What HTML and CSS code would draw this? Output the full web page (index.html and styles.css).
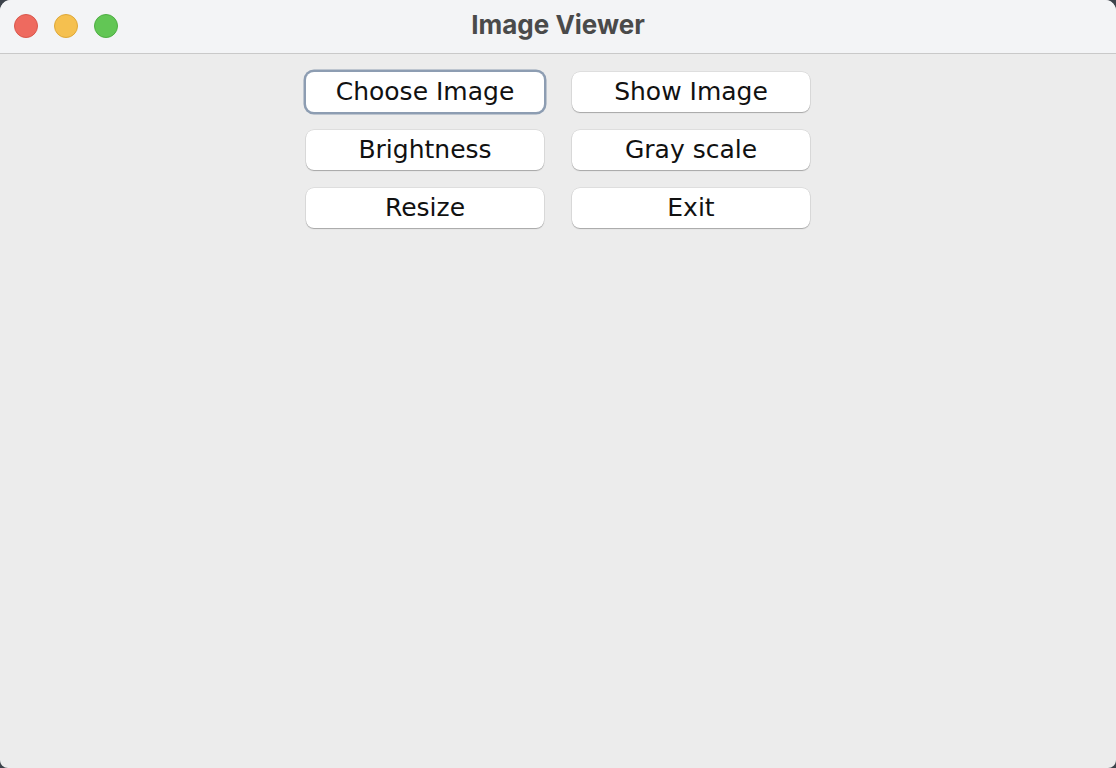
FILE: index.html
```html
<!DOCTYPE html>
<html>
<head>
<meta charset="utf-8">
<link rel="stylesheet" href="styles.css">
</head>
<body>
<div class="window">
  <div class="titlebar">
    <div class="lights">
      <span class="light red"></span>
      <span class="light yellow"></span>
      <span class="light green"></span>
    </div>
    <div class="title">Image Viewer</div>
  </div>
  <div class="content">
    <div class="grid">
      <button class="btn focused">Choose Image</button>
      <button class="btn">Show Image</button>
      <button class="btn">Brightness</button>
      <button class="btn">Gray scale</button>
      <button class="btn">Resize</button>
      <button class="btn">Exit</button>
    </div>
  </div>
</div>
</body>
</html>
```

FILE: styles.css
```css
html, body {
  margin: 0;
  padding: 0;
  width: 1116px;
  height: 768px;
  overflow: hidden;
  background: #3d434b;
}
.window {
  width: 1116px;
  height: 768px;
  border-radius: 11px 11px 8px 8px;
  overflow: hidden;
  background: #ececec;
  display: flex;
  flex-direction: column;
}
.titlebar {
  height: 53px;
  flex: none;
  background: #f3f4f6;
  border-bottom: 1px solid #c9c9c9;
  position: relative;
  display: flex;
  align-items: center;
  justify-content: center;
}
.lights {
  position: absolute;
  left: 14px;
  top: 14px;
  display: flex;
  gap: 16px;
}
.light {
  width: 24px;
  height: 24px;
  border-radius: 50%;
  box-sizing: border-box;
}
.red { background: #ee6a5f; border: 1px solid #d9574c; }
.yellow { background: #f5c04f; border: 1px solid #dea838; }
.green { background: #62c655; border: 1px solid #4eae43; }
.title {
  font-family: Inter, "Liberation Sans", sans-serif;
  font-weight: 700;
  font-size: 26px;
  color: #4a4a4a;
  margin-top: -4px;
}
.content {
  flex: 1;
  display: flex;
  justify-content: center;
  padding-top: 18px;
}
.grid {
  display: grid;
  grid-template-columns: 238px 238px;
  grid-auto-rows: 40px;
  column-gap: 28px;
  row-gap: 18px;
  align-content: start;
}
.btn {
  margin: 0;
  padding: 0 0 2px 0;
  height: 40px;
  border: none;
  border-radius: 8px;
  background: #ffffff;
  box-shadow: 0 1px 1px rgba(0,0,0,0.25), 0 0 0 0.5px rgba(0,0,0,0.12);
  font-family: "DejaVu Sans", sans-serif;
  font-size: 25px;
  color: #111;
}
.btn.focused {
  box-shadow: 0 0 0 2.5px #8d9db2, 0 1px 1px rgba(0,0,0,0.25);
}
```
